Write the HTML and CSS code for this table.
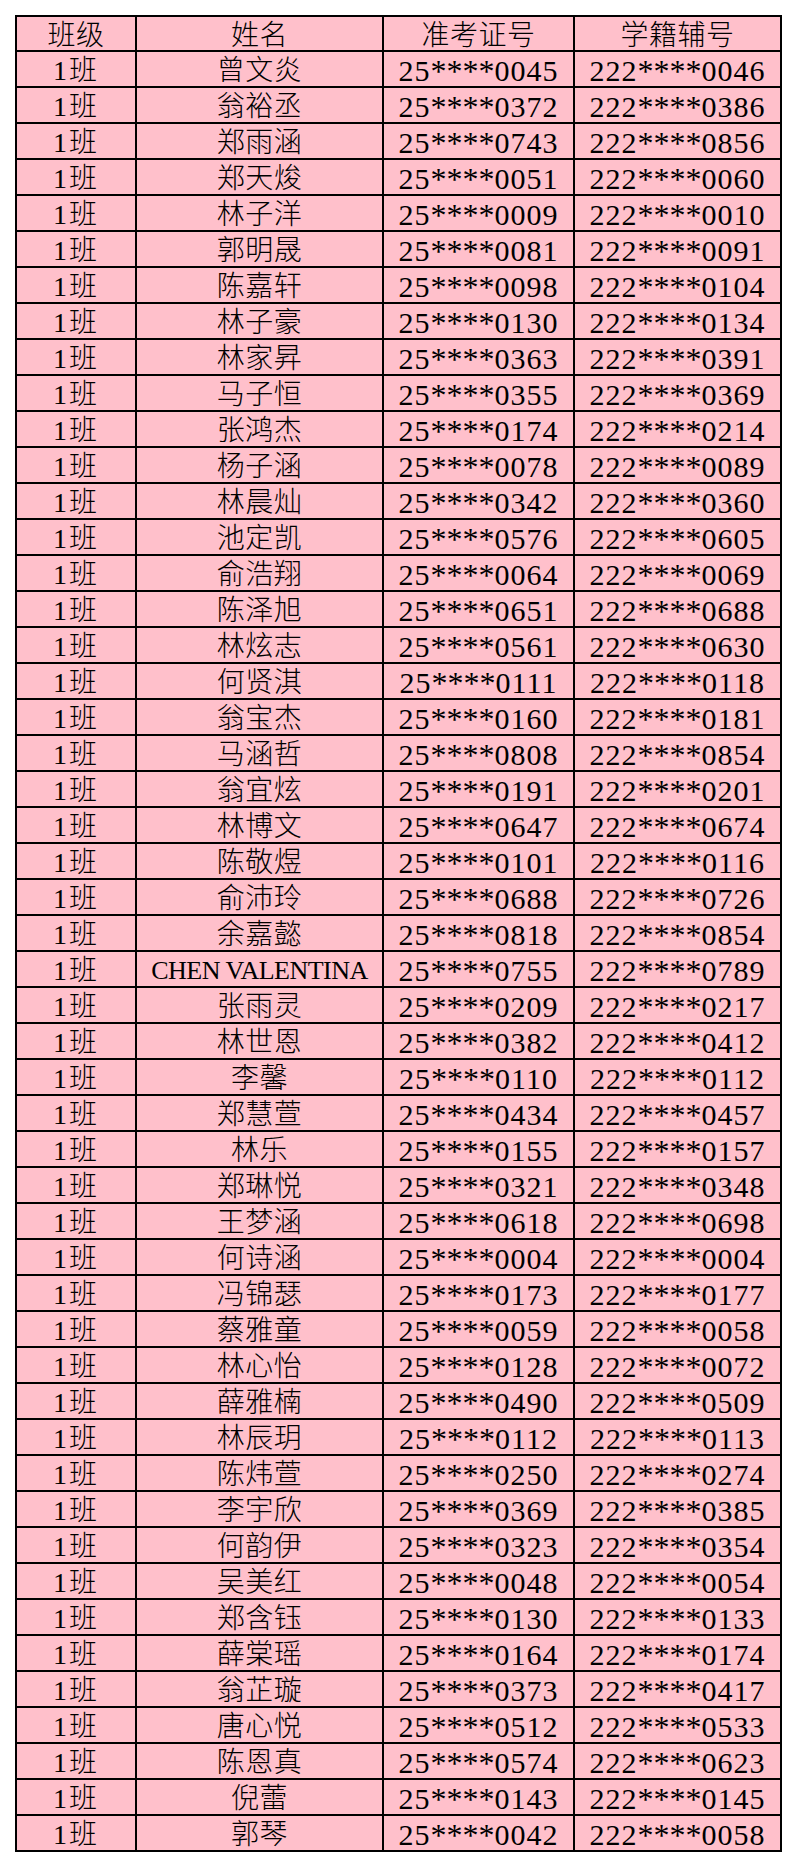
FILE: index.html
```html
<!DOCTYPE html>
<html lang="zh-CN">
<head>
<meta charset="utf-8">
<title>1班名单</title>
<link rel="stylesheet" href="styles.css">
</head>
<body>
<div class="sheet">
  <div class="c hd">班级</div><div class="c hd">姓名</div><div class="c hd">准考证号</div><div class="c hd">学籍辅号</div>
  <div class="c k">1班</div><div class="c">曾文炎</div><div class="c num">25<span class="m">****</span>0045</div><div class="c num">222<span class="m">****</span>0046</div>
  <div class="c k">1班</div><div class="c">翁裕丞</div><div class="c num">25<span class="m">****</span>0372</div><div class="c num">222<span class="m">****</span>0386</div>
  <div class="c k">1班</div><div class="c">郑雨涵</div><div class="c num">25<span class="m">****</span>0743</div><div class="c num">222<span class="m">****</span>0856</div>
  <div class="c k">1班</div><div class="c">郑天焌</div><div class="c num">25<span class="m">****</span>0051</div><div class="c num">222<span class="m">****</span>0060</div>
  <div class="c k">1班</div><div class="c">林子洋</div><div class="c num">25<span class="m">****</span>0009</div><div class="c num">222<span class="m">****</span>0010</div>
  <div class="c k">1班</div><div class="c">郭明晟</div><div class="c num">25<span class="m">****</span>0081</div><div class="c num">222<span class="m">****</span>0091</div>
  <div class="c k">1班</div><div class="c">陈嘉轩</div><div class="c num">25<span class="m">****</span>0098</div><div class="c num">222<span class="m">****</span>0104</div>
  <div class="c k">1班</div><div class="c">林子豪</div><div class="c num">25<span class="m">****</span>0130</div><div class="c num">222<span class="m">****</span>0134</div>
  <div class="c k">1班</div><div class="c">林家昇</div><div class="c num">25<span class="m">****</span>0363</div><div class="c num">222<span class="m">****</span>0391</div>
  <div class="c k">1班</div><div class="c">马子恒</div><div class="c num">25<span class="m">****</span>0355</div><div class="c num">222<span class="m">****</span>0369</div>
  <div class="c k">1班</div><div class="c">张鸿杰</div><div class="c num">25<span class="m">****</span>0174</div><div class="c num">222<span class="m">****</span>0214</div>
  <div class="c k">1班</div><div class="c">杨子涵</div><div class="c num">25<span class="m">****</span>0078</div><div class="c num">222<span class="m">****</span>0089</div>
  <div class="c k">1班</div><div class="c">林晨灿</div><div class="c num">25<span class="m">****</span>0342</div><div class="c num">222<span class="m">****</span>0360</div>
  <div class="c k">1班</div><div class="c">池定凯</div><div class="c num">25<span class="m">****</span>0576</div><div class="c num">222<span class="m">****</span>0605</div>
  <div class="c k">1班</div><div class="c">俞浩翔</div><div class="c num">25<span class="m">****</span>0064</div><div class="c num">222<span class="m">****</span>0069</div>
  <div class="c k">1班</div><div class="c">陈泽旭</div><div class="c num">25<span class="m">****</span>0651</div><div class="c num">222<span class="m">****</span>0688</div>
  <div class="c k">1班</div><div class="c">林炫志</div><div class="c num">25<span class="m">****</span>0561</div><div class="c num">222<span class="m">****</span>0630</div>
  <div class="c k">1班</div><div class="c">何贤淇</div><div class="c num">25<span class="m">****</span>0111</div><div class="c num">222<span class="m">****</span>0118</div>
  <div class="c k">1班</div><div class="c">翁宝杰</div><div class="c num">25<span class="m">****</span>0160</div><div class="c num">222<span class="m">****</span>0181</div>
  <div class="c k">1班</div><div class="c">马涵哲</div><div class="c num">25<span class="m">****</span>0808</div><div class="c num">222<span class="m">****</span>0854</div>
  <div class="c k">1班</div><div class="c">翁宜炫</div><div class="c num">25<span class="m">****</span>0191</div><div class="c num">222<span class="m">****</span>0201</div>
  <div class="c k">1班</div><div class="c">林博文</div><div class="c num">25<span class="m">****</span>0647</div><div class="c num">222<span class="m">****</span>0674</div>
  <div class="c k">1班</div><div class="c">陈敬煜</div><div class="c num">25<span class="m">****</span>0101</div><div class="c num">222<span class="m">****</span>0116</div>
  <div class="c k">1班</div><div class="c">俞沛玲</div><div class="c num">25<span class="m">****</span>0688</div><div class="c num">222<span class="m">****</span>0726</div>
  <div class="c k">1班</div><div class="c">余嘉懿</div><div class="c num">25<span class="m">****</span>0818</div><div class="c num">222<span class="m">****</span>0854</div>
  <div class="c k">1班</div><div class="c latin">CHEN VALENTINA</div><div class="c num">25<span class="m">****</span>0755</div><div class="c num">222<span class="m">****</span>0789</div>
  <div class="c k">1班</div><div class="c">张雨灵</div><div class="c num">25<span class="m">****</span>0209</div><div class="c num">222<span class="m">****</span>0217</div>
  <div class="c k">1班</div><div class="c">林世恩</div><div class="c num">25<span class="m">****</span>0382</div><div class="c num">222<span class="m">****</span>0412</div>
  <div class="c k">1班</div><div class="c">李馨</div><div class="c num">25<span class="m">****</span>0110</div><div class="c num">222<span class="m">****</span>0112</div>
  <div class="c k">1班</div><div class="c">郑慧萱</div><div class="c num">25<span class="m">****</span>0434</div><div class="c num">222<span class="m">****</span>0457</div>
  <div class="c k">1班</div><div class="c">林乐</div><div class="c num">25<span class="m">****</span>0155</div><div class="c num">222<span class="m">****</span>0157</div>
  <div class="c k">1班</div><div class="c">郑琳悦</div><div class="c num">25<span class="m">****</span>0321</div><div class="c num">222<span class="m">****</span>0348</div>
  <div class="c k">1班</div><div class="c">王梦涵</div><div class="c num">25<span class="m">****</span>0618</div><div class="c num">222<span class="m">****</span>0698</div>
  <div class="c k">1班</div><div class="c">何诗涵</div><div class="c num">25<span class="m">****</span>0004</div><div class="c num">222<span class="m">****</span>0004</div>
  <div class="c k">1班</div><div class="c">冯锦瑟</div><div class="c num">25<span class="m">****</span>0173</div><div class="c num">222<span class="m">****</span>0177</div>
  <div class="c k">1班</div><div class="c">蔡雅童</div><div class="c num">25<span class="m">****</span>0059</div><div class="c num">222<span class="m">****</span>0058</div>
  <div class="c k">1班</div><div class="c">林心怡</div><div class="c num">25<span class="m">****</span>0128</div><div class="c num">222<span class="m">****</span>0072</div>
  <div class="c k">1班</div><div class="c">薛雅楠</div><div class="c num">25<span class="m">****</span>0490</div><div class="c num">222<span class="m">****</span>0509</div>
  <div class="c k">1班</div><div class="c">林辰玥</div><div class="c num">25<span class="m">****</span>0112</div><div class="c num">222<span class="m">****</span>0113</div>
  <div class="c k">1班</div><div class="c">陈炜萱</div><div class="c num">25<span class="m">****</span>0250</div><div class="c num">222<span class="m">****</span>0274</div>
  <div class="c k">1班</div><div class="c">李宇欣</div><div class="c num">25<span class="m">****</span>0369</div><div class="c num">222<span class="m">****</span>0385</div>
  <div class="c k">1班</div><div class="c">何韵伊</div><div class="c num">25<span class="m">****</span>0323</div><div class="c num">222<span class="m">****</span>0354</div>
  <div class="c k">1班</div><div class="c">吴美红</div><div class="c num">25<span class="m">****</span>0048</div><div class="c num">222<span class="m">****</span>0054</div>
  <div class="c k">1班</div><div class="c">郑含钰</div><div class="c num">25<span class="m">****</span>0130</div><div class="c num">222<span class="m">****</span>0133</div>
  <div class="c k">1班</div><div class="c">薛棠瑶</div><div class="c num">25<span class="m">****</span>0164</div><div class="c num">222<span class="m">****</span>0174</div>
  <div class="c k">1班</div><div class="c">翁芷璇</div><div class="c num">25<span class="m">****</span>0373</div><div class="c num">222<span class="m">****</span>0417</div>
  <div class="c k">1班</div><div class="c">唐心悦</div><div class="c num">25<span class="m">****</span>0512</div><div class="c num">222<span class="m">****</span>0533</div>
  <div class="c k">1班</div><div class="c">陈恩真</div><div class="c num">25<span class="m">****</span>0574</div><div class="c num">222<span class="m">****</span>0623</div>
  <div class="c k">1班</div><div class="c">倪蕾</div><div class="c num">25<span class="m">****</span>0143</div><div class="c num">222<span class="m">****</span>0145</div>
  <div class="c k">1班</div><div class="c">郭琴</div><div class="c num">25<span class="m">****</span>0042</div><div class="c num">222<span class="m">****</span>0058</div>
</div>
</body>
</html>
```

FILE: styles.css
```css
html, body {
  margin: 0;
  background: #ffffff;
}

body {
  padding: 15px 0 0 15px;
}

.sheet {
  box-sizing: border-box;
  display: grid;
  grid-template-columns: 118px 245px 189px 205px;
  grid-template-rows: repeat(51, 1fr);
  gap: 2px;
  width: 767px;
  height: 1837px;
  border: 2px solid #000;
  background: #000;
}

.c {
  display: flex;
  align-items: center;
  justify-content: center;
  background: #ffc0cb;
  color: #000;
  font-family: "Liberation Serif", "Noto Sans CJK SC", serif;
  font-weight: 300;
  font-size: 28px;
  line-height: 1;
  letter-spacing: 0.5px;
  padding-top: 4px;
  white-space: nowrap;
}

.k {
  letter-spacing: 2px;
}

.num {
  font-size: 30px;
  letter-spacing: 1px;
}

.m {
  font-size: 32px;
  letter-spacing: 0;
  line-height: 0;
  vertical-align: -6px;
}

.latin {
  font-size: 26px;
  letter-spacing: -0.5px;
}
```
